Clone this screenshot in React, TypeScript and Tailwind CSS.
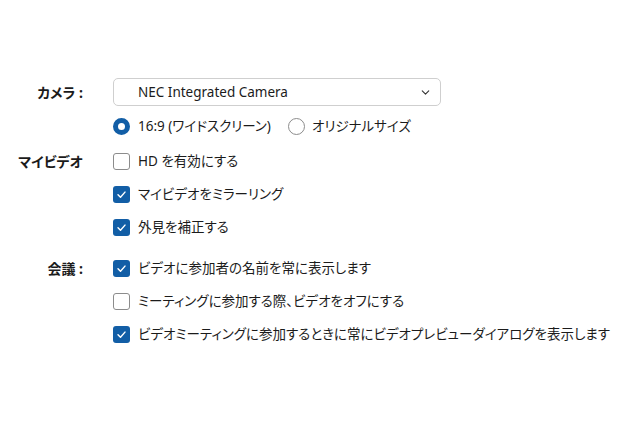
import { ChevronDown } from 'lucide-react';

const BLUE = 'bg-[#125ea6]';

function Checkbox({ checked }: { checked: boolean }) {
    if (checked) {
        return (
            <span className={`w-[17px] h-[17px] rounded-[3px] ${BLUE} flex items-center justify-center shrink-0`}>
                <svg width="11" height="11" viewBox="0 0 12 12" fill="none">
                    <path d="M2.2 6.3 L4.9 8.9 L9.8 3.4" stroke="white" strokeWidth="1.6" strokeLinecap="round" strokeLinejoin="round" />
                </svg>
            </span>
        );
    }
    return <span className="w-[17px] h-[17px] rounded-[3px] border border-[#8c8c8c] bg-white shrink-0" />;
}

function Radio({ checked, className = '' }: { checked: boolean; className?: string }) {
    return checked
        ? <span className={`w-[17px] h-[17px] rounded-full border-[5px] border-[#125ea6] bg-white shrink-0 ${className}`} />
        : <span className={`w-[17px] h-[17px] rounded-full border border-[#8c8c8c] bg-white shrink-0 ${className}`} />;
}

function CheckRow({ checked, text }: { checked: boolean; text: string }) {
    return (
        <div className="h-[33px] flex items-center gap-[8px]">
            <Checkbox checked={checked} />
            <span>{text}</span>
        </div>
    );
}

function Label({ text }: { text: string }) {
    return <div className="h-full flex items-center justify-end font-bold text-[14px] pr-[2px]">{text}</div>;
}

export default function App() {
    return (
        <div className="min-h-[427px] bg-white text-[#1b1b1b] text-[13.5px] font-['Noto_Sans','Noto_Sans_CJK_JP',sans-serif] [font-feature-settings:'palt'] pt-[78px]">
            <div className="grid grid-cols-[85px_1fr] gap-x-[28px]">
                <Label text="カメラ :" />
                <div className="w-[328px] h-[28px] rounded-[5px] border border-[#cfcfcf] flex items-center justify-between pl-[24px] pr-[8px]">
                    <span>NEC Integrated Camera</span>
                    <ChevronDown size={13} strokeWidth={2} className="text-[#333]" />
                </div>

                <div />
                <div className="h-[36px] mt-[2px] flex items-center">
                    <Radio checked />
                    <span className="ml-[8px]">16:9 (ワイドスクリーン)</span>
                    <Radio checked={false} className="ml-[17px]" />
                    <span className="ml-[7px]">オリジナルサイズ</span>
                </div>

                <Label text="マイビデオ" />
                <div className="pt-px">
                    <CheckRow checked={false} text="HD を有効にする" />
                </div>

                <div />
                <CheckRow checked text="マイビデオをミラーリング" />

                <div />
                <CheckRow checked text="外見を補正する" />

                <div className="mt-[8px]"><Label text="会議 :" /></div>
                <div className="mt-[8px]">
                    <CheckRow checked text="ビデオに参加者の名前を常に表示します" />
                </div>

                <div />
                <CheckRow checked={false} text="ミーティングに参加する際、ビデオをオフにする" />

                <div />
                <CheckRow checked text="ビデオミーティングに参加するときに常にビデオプレビューダイアログを表示します" />
            </div>
        </div>
    );
}
